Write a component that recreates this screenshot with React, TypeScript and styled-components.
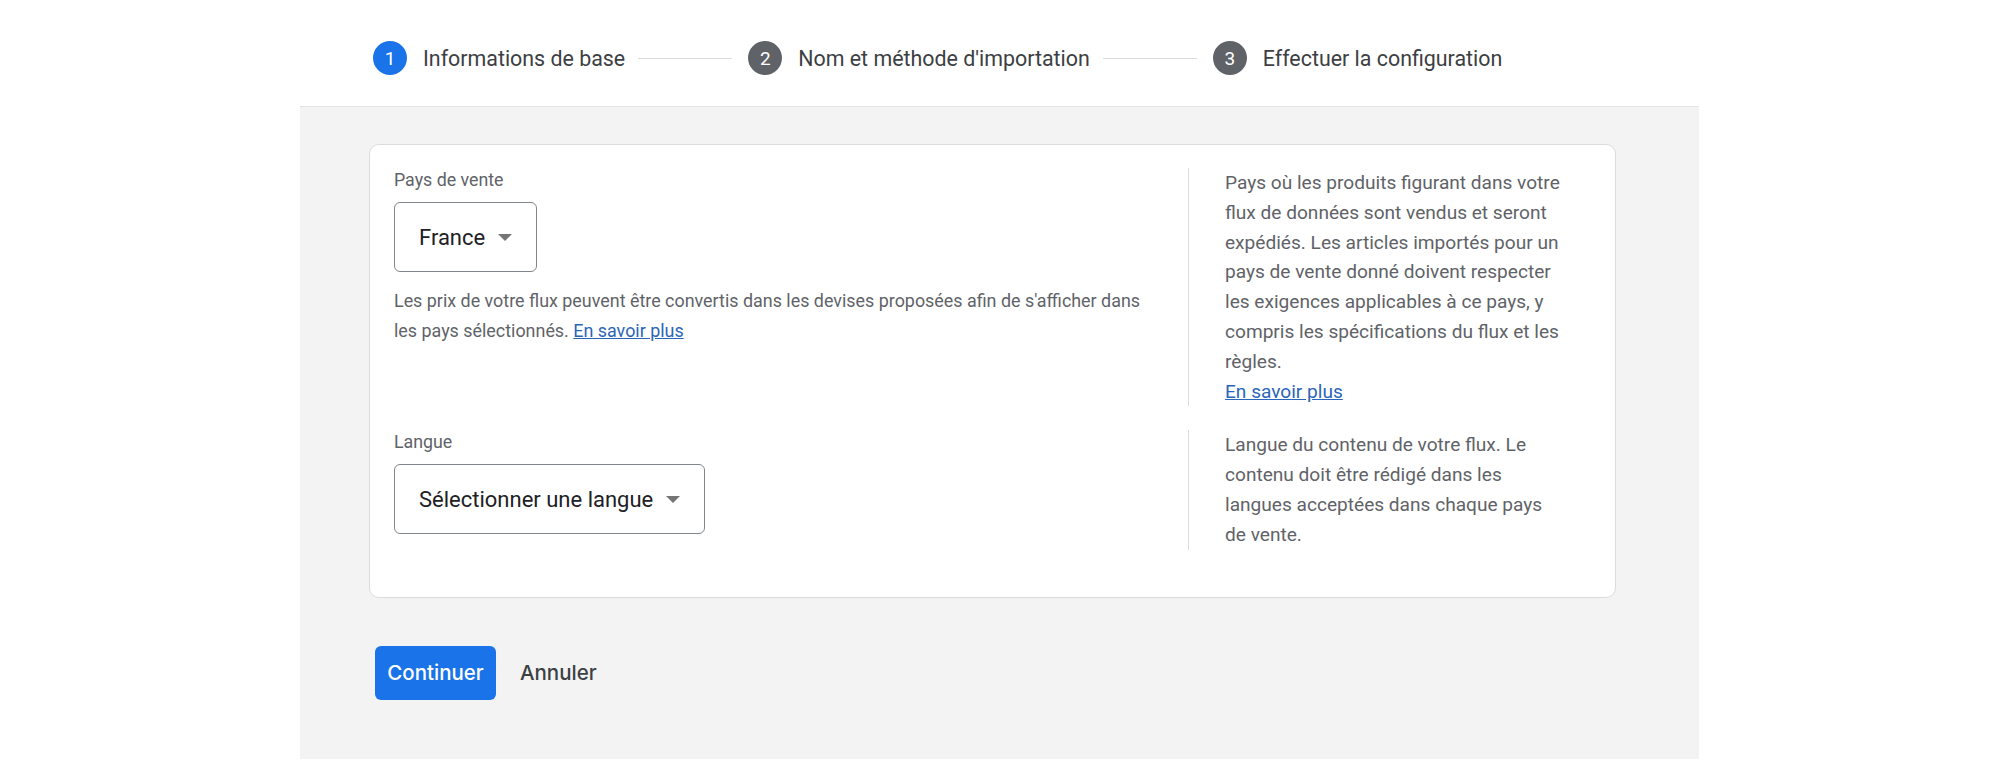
import React from "react";
import styled, { createGlobalStyle } from "styled-components";

const GlobalStyle = createGlobalStyle`
  html, body {
    margin: 0;
    padding: 0;
    background: #ffffff;
    font-family: Roboto, "Liberation Sans", Arial, sans-serif;
  }
`;

const Page = styled.div`
  width: 1399px;
  margin-left: 300px;
`;

const Stepper = styled.div`
  height: 106px;
  display: flex;
  align-items: center;
  padding: 10px 0 0 73px;
  box-sizing: border-box;
`;

const Step = styled.div`
  display: flex;
  align-items: center;
`;

const StepCircle = styled.div<{ $active?: boolean }>`
  width: 34px;
  height: 34px;
  border-radius: 50%;
  background: ${(p) => (p.$active ? "#1a73e8" : "#5f6368")};
  color: #ffffff;
  display: flex;
  align-items: center;
  justify-content: center;
  font-size: 19px;
  flex-shrink: 0;
`;

const StepLabel = styled.span`
  margin-left: 16px;
  font-size: 21.4px;
  color: #3c4043;
  white-space: nowrap;
`;

const StepLine = styled.div`
  width: 94px;
  height: 1px;
  background: #dadce0;
  margin: 0 16px 0 13px;
`;

const Panel = styled.div`
  background: #f3f3f3;
  border-top: 1px solid #e3e3e3;
  padding: 37px 0 59px 69px;
`;

const Card = styled.div`
  width: 1247px;
  box-sizing: border-box;
  background: #ffffff;
  border: 1px solid #dadce0;
  border-radius: 10px;
  padding: 23px 0 47px 24px;
  display: flex;
  flex-direction: column;
  gap: 24px;
`;

const Row = styled.div`
  display: grid;
  grid-template-columns: 794px 1fr;
`;

const Field = styled.div`
  display: flex;
  flex-direction: column;
  align-items: flex-start;
`;

const Label = styled.div`
  font-size: 17.8px;
  line-height: 24px;
  color: #5f6368;
`;

const SelectBox = styled.div`
  margin-top: 10px;
  height: 70px;
  box-sizing: border-box;
  border: 1px solid #80868b;
  border-radius: 6px;
  display: flex;
  align-items: center;
  padding: 0 24px;
  font-size: 22px;
  color: #202124;
  white-space: nowrap;
`;

const Caret = styled.span`
  width: 0;
  height: 0;
  border-left: 7px solid transparent;
  border-right: 7px solid transparent;
  border-top: 7px solid #757575;
  margin-left: 13px;
`;

const Help = styled.p`
  margin: 14px 0 0;
  max-width: 755px;
  font-size: 17.9px;
  line-height: 29.5px;
  color: #5f6368;
`;

const Link = styled.a`
  color: #2a66b8;
  text-decoration: underline;
`;

const Aside = styled.div`
  border-left: 1px solid #dadce0;
  padding: 0 52px 0 36px;
  font-size: 19.1px;
  line-height: 29.8px;
  color: #5f6368;
`;

const Actions = styled.div`
  display: flex;
  align-items: center;
  margin-top: 48px;
  padding-left: 6px;
  gap: 24px;
`;

const PrimaryButton = styled.button`
  width: 121px;
  height: 54px;
  padding: 0;
  border: none;
  border-radius: 6px;
  background: #1a73e8;
  color: #ffffff;
  font-family: Inter, "Open Sans", sans-serif;
  font-size: 20.5px;
  font-weight: 500;
`;

const TextButton = styled.button`
  border: none;
  background: transparent;
  padding: 0;
  color: #3c4043;
  font-family: Inter, "Open Sans", sans-serif;
  font-size: 20.5px;
  font-weight: 500;
`;

const steps = [
  "Informations de base",
  "Nom et méthode d'importation",
  "Effectuer la configuration",
];

export default function App() {
  return (
    <>
      <GlobalStyle />
      <Page>
        <Stepper>
          {steps.map((s, i) => (
            <Step key={s}>
              <StepCircle $active={i === 0}>{i + 1}</StepCircle>
              <StepLabel>{s}</StepLabel>
              {i < steps.length - 1 && <StepLine />}
            </Step>
          ))}
        </Stepper>
        <Panel>
          <Card>
            <Row>
              <Field>
                <Label>Pays de vente</Label>
                <SelectBox>
                  France
                  <Caret />
                </SelectBox>
                <Help>
                  Les prix de votre flux peuvent être convertis dans les devises
                  proposées afin de s'afficher dans les pays sélectionnés.{" "}
                  <Link href="#">En savoir plus</Link>
                </Help>
              </Field>
              <Aside>
                Pays où les produits figurant dans votre flux de données sont
                vendus et seront expédiés. Les articles importés pour un pays de
                vente donné doivent respecter les exigences applicables à ce
                pays, y compris les spécifications du flux et les règles.
                <br />
                <Link href="#">En savoir plus</Link>
              </Aside>
            </Row>
            <Row>
              <Field>
                <Label>Langue</Label>
                <SelectBox>
                  Sélectionner une langue
                  <Caret />
                </SelectBox>
              </Field>
              <Aside>
                Langue du contenu de votre flux. Le contenu doit être rédigé dans
                les langues acceptées dans chaque pays de vente.
              </Aside>
            </Row>
          </Card>
          <Actions>
            <PrimaryButton>Continuer</PrimaryButton>
            <TextButton>Annuler</TextButton>
          </Actions>
        </Panel>
      </Page>
    </>
  );
}
